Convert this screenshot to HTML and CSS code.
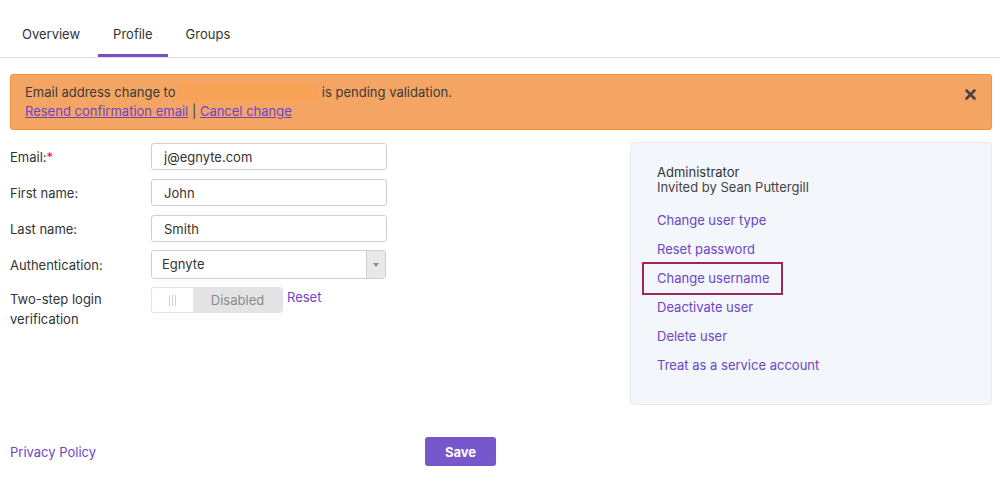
FILE: index.html
```html
<!DOCTYPE html>
<html lang="en">
<head>
    <meta charset="UTF-8">
    <meta name="viewport" content="width=device-width, initial-scale=1.0">
    <title>User Profile</title>
    <link rel="stylesheet" href="styles.css">
</head>
<body>
    <nav class="tabs">
        <a class="tab">Overview</a>
        <a class="tab active">Profile</a>
        <a class="tab">Groups</a>
    </nav>

    <div class="page">
        <div class="alert">
            <div class="alert-text">
                <div>Email address change to <span class="redacted"></span> is pending validation.</div>
                <div><a href="#">Resend confirmation email</a> | <a href="#">Cancel change</a></div>
            </div>
            <button class="alert-close" aria-label="Close">
                <svg width="11" height="11" viewBox="0 0 11 11">
                    <path d="M1.5 1.5 L9.5 9.5 M9.5 1.5 L1.5 9.5" stroke="#444" stroke-width="2.6" stroke-linecap="round"/>
                </svg>
            </button>
        </div>

        <div class="content">
            <form class="profile-form">
                <div class="form-row">
                    <label>Email:<span class="required">*</span></label>
                    <input type="text" value="j@egnyte.com">
                </div>
                <div class="form-row">
                    <label>First name:</label>
                    <input type="text" value="John">
                </div>
                <div class="form-row">
                    <label>Last name:</label>
                    <input type="text" value="Smith">
                </div>
                <div class="form-row select-row">
                    <label>Authentication:</label>
                    <div class="select">
                        <span class="select-value">Egnyte</span>
                        <span class="select-arrow"></span>
                    </div>
                </div>
                <div class="form-row top-row">
                    <label>Two-step login<br>verification</label>
                    <div class="toggle">
                        <span class="toggle-handle"><i></i><i></i><i></i></span>
                        <span class="toggle-label">Disabled</span>
                    </div>
                    <a href="#" class="reset-link">Reset</a>
                </div>
            </form>

            <aside class="side-panel">
                <div class="user-type">Administrator</div>
                <div class="user-invited">Invited by Sean Puttergill</div>
                <ul class="actions">
                    <li><a href="#">Change user type</a></li>
                    <li><a href="#">Reset password</a></li>
                    <li><a href="#" class="highlight">Change username</a></li>
                    <li><a href="#">Deactivate user</a></li>
                    <li><a href="#">Delete user</a></li>
                    <li><a href="#">Treat as a service account</a></li>
                </ul>
            </aside>
        </div>

        <footer class="footer">
            <a href="#" class="privacy">Privacy Policy</a>
            <button class="save-btn">Save</button>
        </footer>
    </div>
</body>
</html>
```

FILE: styles.css
```css
body {
    margin: 0;
    font-family: Inter, "Noto Sans", sans-serif;
    font-size: 13px;
    color: #333;
    background: #fff;
}
a {
    color: #6c45c9;
    text-decoration: none;
}
.tabs {
    display: flex;
    gap: 3px;
    padding-left: 7px;
    border-bottom: 1px solid #e2e2e2;
}
.tab {
    color: #333;
    padding: 24px 15px 10px;
    line-height: 20px;
    border-bottom: 3px solid transparent;
}
.tab.active {
    border-bottom-color: #7450cc;
}
.page {
    padding: 16px 8px 0 10px;
}
.alert {
    display: flex;
    justify-content: space-between;
    background-color: #f4a564;
    border: 1px solid #f39437;
    border-radius: 3px;
    padding: 8px 14px;
    line-height: 19px;
    color: #3a3a3a;
}
.alert a {
    text-decoration: underline;
}
.redacted {
    display: inline-block;
    width: 139px;
    height: 18px;
    vertical-align: -4px;
    background-color: #f8a258;
}
.alert-close {
    background: none;
    border: none;
    padding: 0;
    margin: 5px 1px 0 0;
    height: 12px;
    cursor: pointer;
}
.content {
    display: flex;
    justify-content: space-between;
    align-items: flex-start;
    margin-top: 12px;
}
.profile-form {
    display: flex;
    flex-direction: column;
    gap: 9px;
    padding-top: 1px;
}
.form-row {
    display: flex;
    align-items: center;
}
.form-row label {
    width: 141px;
    line-height: 20px;
}
.required {
    color: #e0201c;
}
.form-row input {
    box-sizing: border-box;
    width: 236px;
    height: 27px;
    padding: 0 12px;
    border: 1px solid #cfcfcf;
    border-radius: 3px;
    font-family: inherit;
    font-size: 13px;
    color: #333;
}
.select-row {
    margin-top: -1px;
}
.select {
    box-sizing: border-box;
    display: flex;
    width: 235px;
    height: 29px;
    border: 1px solid #cfcfcf;
    border-radius: 3px;
}
.select-value {
    flex-grow: 1;
    padding-left: 10px;
    line-height: 27px;
}
.select-arrow {
    width: 18px;
    background: #e9e9ea;
    border-left: 1px solid #d0d0d0;
    position: relative;
}
.select-arrow::after {
    content: "";
    position: absolute;
    left: 6px;
    top: 12px;
    border-left: 3px solid transparent;
    border-right: 3px solid transparent;
    border-top: 4px solid #8a8a8a;
}
.top-row {
    align-items: flex-start;
    margin-top: -1px;
}
.top-row label {
    margin-top: 2px;
}
.toggle {
    box-sizing: border-box;
    display: flex;
    width: 132px;
    height: 26px;
    border: 1px solid #e3e3e3;
    border-radius: 3px;
    overflow: hidden;
}
.toggle-handle {
    width: 41px;
    display: flex;
    justify-content: center;
    align-items: center;
    gap: 2px;
    background: #fff;
}
.toggle-handle i {
    width: 1px;
    height: 11px;
    background: #cfcfcf;
}
.toggle-label {
    flex-grow: 1;
    background: #e4e4e6;
    color: #8a8a8a;
    text-align: center;
    line-height: 24px;
}
.reset-link {
    margin-left: 4px;
    line-height: 20px;
}
.side-panel {
    box-sizing: border-box;
    width: 362px;
    background-color: #f3f6fa;
    border: 1px solid #e7ebf0;
    border-radius: 3px;
    padding: 22px 26px 24px;
}
.user-type,
.user-invited {
    line-height: 15px;
}
.user-invited {
    color: #444;
}
.actions {
    list-style: none;
    margin: 11px 0 0;
    padding: 0;
}
.actions li {
    line-height: 29px;
}
.highlight {
    position: relative;
}
.highlight::after {
    content: "";
    position: absolute;
    left: -15px;
    right: -13px;
    top: -8px;
    bottom: -9px;
    border: 2px solid #9b2856;
}
.footer {
    display: flex;
    align-items: center;
    margin-top: 32px;
}
.privacy {
    line-height: 20px;
}
.save-btn {
    margin-left: 329px;
    width: 71px;
    height: 29px;
    background-color: #7856cb;
    color: #fff;
    border: none;
    border-radius: 3px;
    font-family: inherit;
    font-size: 13px;
    font-weight: 700;
    cursor: pointer;
}
```
